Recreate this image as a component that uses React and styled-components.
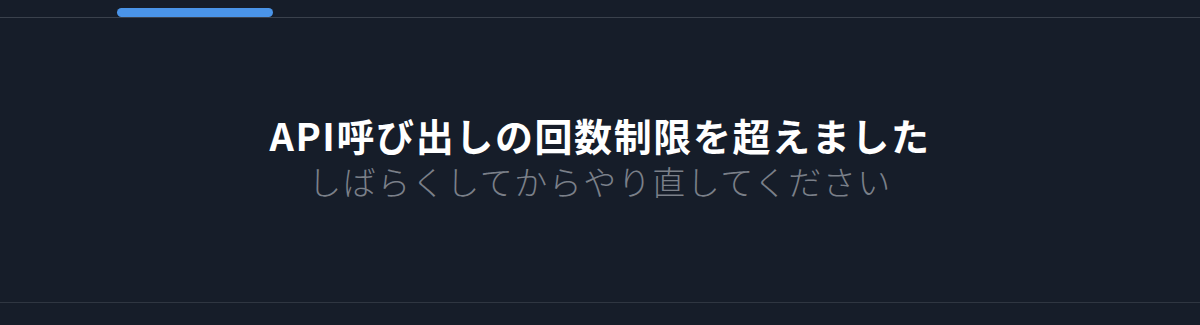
import React from 'react';
import styled, { createGlobalStyle } from 'styled-components';

const GlobalStyle = createGlobalStyle`
  html, body {
    margin: 0;
    padding: 0;
    background: #161d29;
  }
  body {
    font-family: "Noto Sans CJK JP", "Noto Sans", sans-serif;
  }
`;

const Page = styled.div`
  width: 1200px;
  height: 325px;
  background: #161d29;
  display: flex;
  flex-direction: column;
  overflow: hidden;
`;

const TabBar = styled.div`
  height: 17px;
  border-bottom: 1px solid #3a414c;
  display: flex;
  align-items: flex-end;
  padding-left: 117px;
`;

const ActiveTab = styled.div`
  width: 156px;
  height: 9px;
  border-radius: 5px;
  background: #4a94e8;
`;

const Body = styled.div`
  height: 285px;
  box-sizing: border-box;
  padding-bottom: 4px;
  border-bottom: 1px solid #2f3641;
  display: flex;
  flex-direction: column;
  align-items: center;
  justify-content: center;
`;

const Title = styled.h1`
  margin: 0;
  font-size: 38px;
  font-weight: 700;
  letter-spacing: 1.6px;
  color: #ffffff;
  line-height: 46px;
`;

const Subtitle = styled.p`
  margin: 0;
  font-size: 33px;
  font-weight: 300;
  letter-spacing: 1.5px;
  color: #7b8089;
  line-height: 46px;
`;

export default function App() {
  return (
    <>
      <GlobalStyle />
      <Page>
        <TabBar>
          <ActiveTab />
        </TabBar>
        <Body>
          <Title>API呼び出しの回数制限を超えました</Title>
          <Subtitle>しばらくしてからやり直してください</Subtitle>
        </Body>
      </Page>
    </>
  );
}
